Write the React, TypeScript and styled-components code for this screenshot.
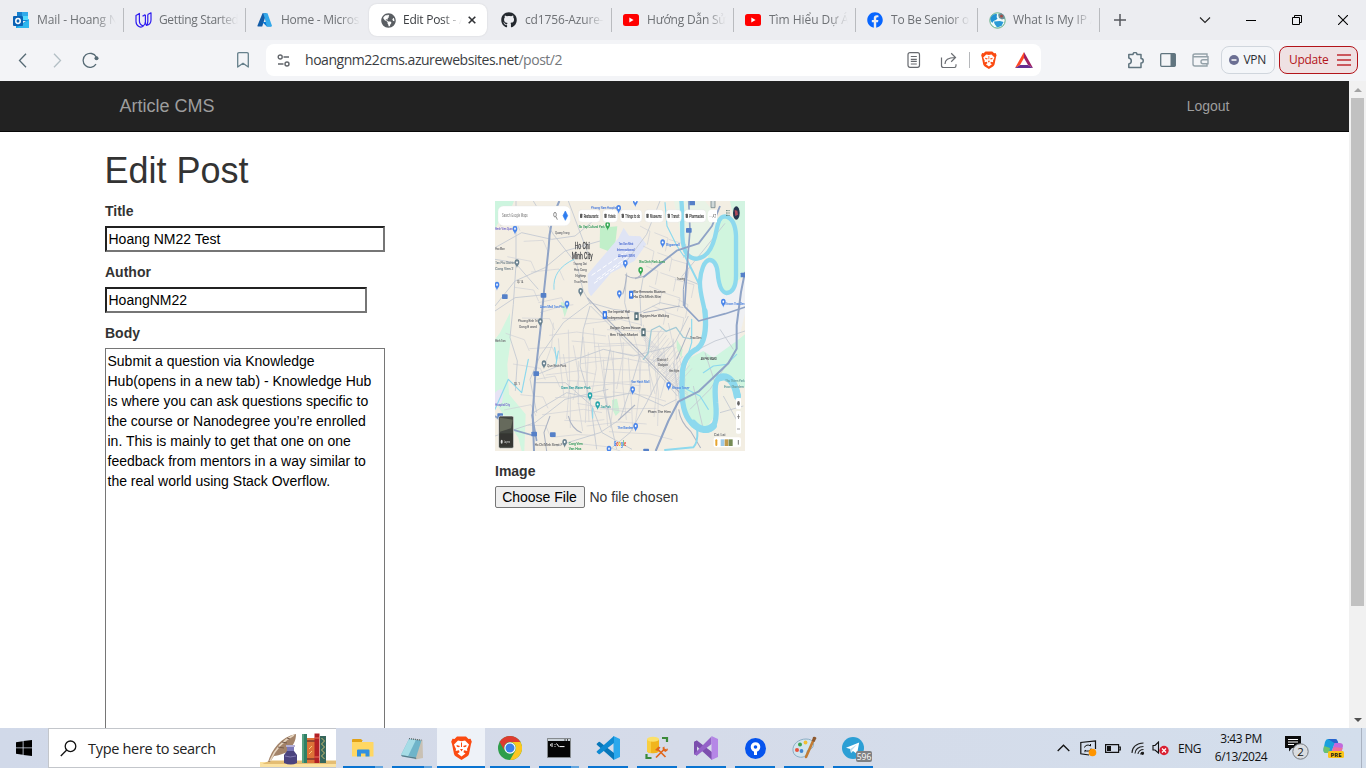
import React from "react";
import styled, { createGlobalStyle, css } from "styled-components";
import { FaGithub, FaFacebook, FaGlobeAmericas } from "react-icons/fa";

const ui = `"Open Sans", "Noto Sans", sans-serif`;
const arial = `"Liberation Sans", Arial, sans-serif`;

const GlobalStyle = createGlobalStyle`
  *, *::before, *::after { box-sizing: border-box; }
  html, body { margin: 0; padding: 0; background: #fff; overflow: hidden; }
  svg { display: block; flex: none; }
`;

const Screen = styled.div`
  width: 1366px;
  height: 768px;
  display: flex;
  flex-direction: column;
  overflow: hidden;
  font-family: ${ui};
`;

/* ---------- browser chrome ---------- */

const TabStrip = styled.div`
  height: 40px;
  flex: none;
  background: #ecedf1;
  display: flex;
  align-items: center;
  padding-left: 2px;
`;

const Tab = styled.div<{ $active?: boolean; $divider?: boolean }>`
  width: ${(p) => (p.$active ? 118 : 122)}px;
  height: 32px;
  margin: ${(p) => (p.$active ? "0 3px 0 1px" : "0")};
  padding: 0 ${(p) => (p.$active ? 9 : 8)}px 0 11px;
  flex: none;
  display: flex;
  align-items: center;
  border-radius: ${(p) => (p.$active ? 8 : 0)}px;
  ${(p) => p.$active && css`background: #fff; box-shadow: 0 0 2px rgba(0, 0, 0, 0.12);`}
  ${(p) =>
    p.$divider &&
    css`
      background: linear-gradient(#b9bbbf, #b9bbbf) right center / 1px 24px no-repeat;
    `}
`;

const TabIcon = styled.span`
  width: 16px;
  height: 16px;
  flex: none;
  display: flex;
  align-items: center;
  justify-content: center;
`;

const TabTitle = styled.span<{ $active?: boolean; $space?: number }>`
  flex: 1;
  min-width: 0;
  margin-left: ${(p) => (p.$active ? 7 : 8)}px;
  overflow: hidden;
  white-space: nowrap;
  font-size: 12px;
  line-height: 20px;
  letter-spacing: ${(p) => p.$space ?? -0.15}px;
  color: ${(p) => (p.$active ? "#3b3e42" : "#6e7175")};
  mask-image: linear-gradient(90deg, #000 calc(100% - 20px), transparent 100%);
`;

const TabClose = styled.span`
  width: 10px;
  margin-left: 6px;
  flex: none;
`;

const NewTab = styled.div`
  width: 40px;
  display: flex;
  justify-content: center;
`;

const WindowButtons = styled.div`
  margin-left: auto;
  display: flex;
`;

const WindowButton = styled.div`
  width: 46px;
  height: 40px;
  display: flex;
  align-items: center;
  justify-content: center;
`;

const Toolbar = styled.div`
  height: 41px;
  flex: none;
  background: #f3f4f7;
  display: flex;
  align-items: center;
  padding: 0 8px 1px 16px;
`;

const NavButtons = styled.div`
  display: flex;
  align-items: center;
  gap: 18px;
  width: 220px;
`;

const AddressBar = styled.div`
  width: 775px;
  height: 32px;
  margin-left: 16px;
  padding: 0 8px 0 11px;
  border-radius: 8px;
  background: #fff;
  display: flex;
  align-items: center;
`;

const Url = styled.span`
  flex: 1;
  margin-left: 14px;
  font-size: 14px;
  line-height: 20px;
  letter-spacing: -0.46px;
  color: #3a3d42;
  span { color: #74777c; }
`;

const ShareIcon = styled.svg`
  margin-left: 19px;
`;

const BarDivider = styled.span`
  width: 1px;
  height: 16px;
  margin: 0 11px;
  background: #b6b8bb;
`;

const RewardsIcon = styled.svg`
  margin-left: 18px;
`;

const ExtensionIcons = styled.div`
  display: flex;
  align-items: center;
  gap: 16px;
  margin-left: 86px;
`;

const PillButton = styled.div<{ $alert?: boolean }>`
  height: 28px;
  width: ${(p) => (p.$alert ? 79 : 54)}px;
  margin-left: ${(p) => (p.$alert ? 4 : 12)}px;
  padding: 0 ${(p) => (p.$alert ? "6px 0 9px" : "8px 0 7px")};
  border: 1px solid ${(p) => (p.$alert ? "#b3141a" : "#d0d6dd")};
  border-radius: 8px;
  background: ${(p) => (p.$alert ? "#efe1e3" : "#f4f6f9")};
  color: ${(p) => (p.$alert ? "#b3141a" : "#2a2d33")};
  display: flex;
  align-items: center;
  justify-content: space-between;
  font-size: 12px;
  line-height: 16px;
  letter-spacing: -0.3px;
`;

/* ---------- web page ---------- */

const Viewport = styled.div`
  height: 647px;
  flex: none;
  display: flex;
  overflow: hidden;
  background: #fff;
`;

const Page = styled.div`
  flex: 1;
  overflow: hidden;
  font-family: ${arial};
  font-size: 14px;
  line-height: 20px;
  color: #333;
`;

const Navbar = styled.nav`
  height: 51px;
  background: #222;
  border-bottom: 1px solid #080808;
`;

const Container = styled.div`
  width: 1170px;
  margin: 0 auto;
  padding: 0 15px;
`;

const NavRow = styled(Container)`
  height: 50px;
  display: flex;
  align-items: center;
  justify-content: space-between;
  padding: 0 30px;
  color: #9d9d9d;
`;

const Brand = styled.span`
  font-size: 18px;
`;

const Heading = styled.h1`
  height: 40px;
  margin: 19px 0 10px;
  font-size: 36px;
  font-weight: 400;
  line-height: 40px;
`;

const FormColumns = styled.form`
  display: flex;
`;

const FormColumn = styled.div`
  width: 390px;
  display: flex;
  flex-direction: column;
  align-items: flex-start;
`;

const Field = styled.div`
  display: flex;
  flex-direction: column;
  margin-bottom: 10px;
`;

const Label = styled.label`
  margin-bottom: 5px;
  padding-left: 0.5px;
  font-weight: 700;
`;

const TextInput = styled.input<{ $width: number }>`
  width: ${(p) => p.$width}px;
  height: 26px;
  padding: 1px 1px 1px 2px;
  border: 2px solid #767676;
  border-top-color: #212121;
  border-left-color: #212121;
  border-radius: 0;
  outline: 0;
  background: #fff;
  font: 14px/20px ${arial};
  color: #000;
`;

const TextArea = styled.textarea`
  width: 280px;
  height: 606px;
  padding: 2px;
  border: 1px solid #767676;
  border-radius: 0;
  resize: none;
  outline: 0;
  overflow: hidden;
  font: 14px/20px ${arial};
  color: #000;
`;

const MapFrame = styled.div`
  width: 250px;
  height: 250px;
  margin-bottom: 10px;
  overflow: hidden;
`;

const FileRow = styled.div`
  display: flex;
  align-items: center;
  gap: 5px;
`;

const FileButton = styled.button`
  width: 90px;
  height: 22px;
  padding: 0;
  border: 1px solid #767676;
  border-radius: 2px;
  background: #efefef;
  font: 14px/18px ${arial};
  color: #000;
`;

const Scrollbar = styled.div`
  width: 17px;
  flex: none;
  background: #f1f1f1;
  display: flex;
  flex-direction: column;
  align-items: center;
`;

const ScrollArrow = styled.div`
  height: 17px;
  display: flex;
  align-items: center;
`;

const ScrollThumb = styled.div`
  width: 13px;
  height: 508px;
  margin-bottom: auto;
  background: #c1c1c1;
`;

/* ---------- taskbar ---------- */

const Taskbar = styled.div`
  height: 40px;
  flex: none;
  display: flex;
  background: linear-gradient(90deg, #d1d9e9, #d5dbe9 50%, #d3deec);
  color: #111;
`;

const StartButton = styled.div`
  width: 48px;
  display: flex;
  align-items: center;
  justify-content: center;
`;

const SearchBox = styled.div`
  width: 288px;
  height: 40px;
  padding-left: 11px;
  border: 1px solid #c3c6cb;
  border-right: 0;
  background: #fff;
  display: flex;
  align-items: center;
`;

const SearchText = styled.span`
  flex: 1;
  margin-left: 11px;
  padding-top: 2px;
  font-size: 14.5px;
  letter-spacing: -0.3px;
  line-height: 20px;
  white-space: nowrap;
  color: #222;
`;

const AppList = styled.div`
  display: flex;
  margin-left: 3px;
  gap: 1px;
`;

const AppButton = styled.div<{ $active?: boolean; $stacked?: boolean }>`
  width: 48px;
  height: 40px;
  display: flex;
  align-items: center;
  justify-content: center;
  position: relative;
  background: ${(p) => (p.$active ? "#eef2f8" : "transparent")};
  &::after {
    content: "";
    position: absolute;
    bottom: 0;
    left: ${(p) => (p.$active ? 0 : 4)}px;
    right: ${(p) => (p.$active ? 0 : 4)}px;
    height: 2px;
    background: ${(p) =>
      p.$stacked ? "linear-gradient(90deg, #0a74d1 32px, #62a5df 32px)" : "#0a74d1"};
  }
`;

const CountBadge = styled.span`
  position: absolute;
  right: 5px;
  bottom: 6px;
  width: 16px;
  height: 11px;
  border-radius: 2px;
  background: #7e8083;
  color: #fff;
  font-size: 8.5px;
  line-height: 11px;
  text-align: center;
`;

const Tray = styled.div`
  margin-left: auto;
  display: flex;
  align-items: center;
  font-size: 12px;
`;

const TrayIcon = styled.span<{ $gap: number }>`
  margin-right: ${(p) => p.$gap}px;
`;

const Language = styled.span`
  width: 24px;
  font-size: 12px;
  letter-spacing: -0.5px;
  white-space: nowrap;
`;

const Clock = styled.div`
  width: 62px;
  margin: 0 13px 0 8px;
  display: flex;
  flex-direction: column;
  align-items: center;
  font-size: 12px;
  line-height: 18px;
  letter-spacing: -0.5px;
  white-space: nowrap;
`;

const Notifications = styled.svg`
  margin-right: 14px;
`;

const ShowDesktop = styled.div`
  width: 5px;
  height: 40px;
  margin-left: 17px;
  border-left: 1px solid #a9b2c1;
`;

/* ---------- tab icons ---------- */

const OutlookIcon = () => (
  <svg width="16" height="16" viewBox="0 0 16 16">
    <path d="M4 0h11v9H4z" fill="#1681cf" />
    <path d="M9 0h6v4H9z" fill="#30a9ea" />
    <path d="M9 4h6v4H9z" fill="#50d9ff" />
    <path d="M3 7l7 4 6-4v9H3z" fill="#1a9be0" />
    <path d="M3 16l13-8v8z" fill="#2fb7ef" />
    <rect y="4" width="10" height="10" rx="1" fill="#0b62b4" />
    <ellipse cx="5" cy="9" rx="2.2" ry="2.4" fill="none" stroke="#fff" strokeWidth="1.5" />
  </svg>
);

const UdacityIcon = () => (
  <svg width="17" height="16" viewBox="0 0 17 16" fill="none" stroke="#2f1df0" strokeWidth="1.2" strokeLinejoin="round">
    <path d="M1 3.4 4.4 1.4V9c0 2.600 1.400 4.200 4 4.900C6 16.300 1 14.500 1 9.600z" />
    <path d="M8.400 13.900C9.800 12.800 10.400 11.600 10.400 10V3" />
    <path d="M7.500 4.200 10.400 2.600" />
    <path d="M12.800 2.600 16 .8V8c0 3-1.700 4.800-4.600 5.400-.8-.8-1-1.800-1-3.400M12.800 2.600V9.500c0 1.800-.5 3-1.400 3.900" />
  </svg>
);

const AzureIcon = () => (
  <svg width="16" height="16" viewBox="0 0 16 16">
    <path d="M5.500 1.200h4L5.200 14.600H1.300c-.7 0-1-.6-.8-1.200z" fill="#125ca8" />
    <path d="M11 10H5.200l4.600 4.600h4.400z" fill="#0a78d4" />
    <path d="M6.200 1.200h4.300l4.400 12.200c.3.700-.2 1.200-.8 1.200h-4.300L7.700 6z" fill="#33a8ea" />
  </svg>
);

const YoutubeIcon = () => (
  <svg width="16" height="12" viewBox="0 0 16 12">
    <rect width="16" height="12" rx="2.500" fill="#f00" />
    <path d="M6.300 3.500 10.600 6 6.300 8.500z" fill="#fff" />
  </svg>
);

const EarthIcon = () => (
  <svg width="17" height="17" viewBox="0 0 17 17">
    <circle cx="8.500" cy="8.500" r="7.700" fill="#f1fbfa" stroke="#5fae83" strokeWidth="1" />
    <path d="M1.500 6C3 3 5.500 1.300 8 2.200 8 4 7 5 8.500 6.500 7 9 4 8 3.500 11 2 10 1 8 1.500 6z" fill="#2193d2" />
    <path d="M5 9.500l6-.5 3.500 1-2 4-4.500 1.600C7 13.500 5 12 5 9.500z" fill="#2a9ad6" />
    <path d="M9 2.500l3-1.500 3 2 1 3.500-3 1-3-1.500z" fill="#6b8f98" />
    <circle cx="12.500" cy="4.200" r="1.400" fill="#a54b44" />
  </svg>
);

/* ---------- map picture ---------- */

const Pin = ({ x, y, c }: { x: number; y: number; c: string }) => (
  <g>
    <path d={`M${x} ${y + 18}c-1-9-7-10-7-18a7 9 0 0 1 14 0c0 8-6 9-7 18z`} fill={c} />
    <ellipse cx={x} cy={y} rx="2.500" ry="3.500" fill="#fff" />
  </g>
);

const bluePins = [[75, 98], [386, 36], [436, 16], [518, 139], [406, 201], [388, 292], [231, 323], [21, 266], [700, 317], [428, 580], [536, 567], [437, 690], [357, 758]];
const greyPins = [[81, 199], [272, 285], [151, 376], [162, 502], [224, 738]];

const minorStreets: string[] = [];
for (let i = 0; i < 26; i++) {
  const x = 190 + i * 15;
  const y = 380 + ((i * 47) % 120);
  minorStreets.push(`M${x} ${y}l${((i * 13) % 30) - 5} ${70 + ((i * 29) % 90)}l${((i * 31) % 40) - 22} ${60 + ((i * 17) % 60)}`);
}
for (let i = 0; i < 24; i++) {
  const y = 350 + i * 17;
  const x = 150 + ((i * 67) % 240);
  minorStreets.push(`M${x} ${y}l${60 + ((i * 23) % 70)} ${((i * 19) % 34) - 18}l${40 + ((i * 37) % 50)} ${((i * 11) % 26) - 6}`);
}
for (let i = 0; i < 14; i++) {
  minorStreets.push(`M${455 + i * 8} ${480 + i * 7}l${60 - i} ${-80 + i * 2}M${440 + i * 7} ${395 + i * 12}l70 ${65 - i}`);
}
for (let i = 0; i < 14; i++) {
  minorStreets.push(`M${30 + ((i * 71) % 120)} ${90 + i * 46}l${45 + ((i * 13) % 40)} ${((i * 17) % 40) - 20}l15 34`);
  minorStreets.push(`M${450 + ((i * 43) % 120)} ${90 + i * 20}l${30 + ((i * 11) % 30)} 16l-8 40`);
}

const mapLabels: [number, number, number, string, string][] = [
  [303, 40, 78, "#5d87dc", "Phuong Nam Hospital"],
  [266, 95, 78, "#47a36b", "Go Vap Cultural Park"],
  [386, 146, 44, "#5b79d6", "Tan Son Nhat"],
  [380, 165, 54, "#5b79d6", "International"],
  [384, 183, 50, "#5b79d6", "Airport SGN"],
  [528, 151, 42, "#5b8de0", "Gigamall"],
  [447, 201, 78, "#47a36b", "Gia Dinh Park Area"],
  [16, 205, 58, "#7b8a92", "Tan Phu District"],
  [16, 221, 54, "#7b8a92", "Cong Vien 2"],
  [430, 290, 96, "#6f7073", "War Remnants Museum"],
  [430, 307, 82, "#6f7073", "Ho Chi Minh Site"],
  [352, 350, 68, "#6f7073", "The Imperial Hall"],
  [352, 368, 66, "#6f7073", "Independence"],
  [449, 363, 88, "#6f7073", "Nguyen Hue Walking"],
  [360, 400, 92, "#6f7073", "Saigon Opera House"],
  [360, 419, 84, "#6f7073", "Ben Thanh Market"],
  [150, 335, 73, "#5b8de0", "Aeon Mall Tan Phu"],
  [84, 378, 60, "#7b7d80", "Phuong Binh Tri"],
  [88, 396, 52, "#7b7d80", "Dong B ward"],
  [172, 514, 57, "#7b7d80", "Que Binh Park"],
  [214, 579, 88, "#3fa3a3", "Dam Sen Water Park"],
  [332, 635, 30, "#3fa3a3", "Zoo Park"],
  [424, 561, 54, "#5b8de0", "Van Hanh Mall"],
  [546, 578, 52, "#5b8de0", "Bitexco Tower"],
  [382, 698, 48, "#5b8de0", "The Garden"],
  [473, 652, 70, "#76777a", "Pham The Hien"],
  [632, 491, 48, "#55565a", "AN PHU WARD"],
  [560, 253, 24, "#76777a", "Truong"],
  [600, 430, 34, "#76777a", "Thao Dien"],
  [16, 161, 28, "#76777a", "Hoc Mon"],
  [82, 262, 18, "#76777a", "QL 1A"],
  [16, 437, 30, "#76777a", "Binh Tan"],
  [72, 566, 18, "#76777a", "QL 1"],
  [16, 630, 44, "#8178d0", "Hospital City"],
  [502, 494, 34, "#76777a", "District 1"],
  [504, 510, 30, "#76777a", "Saigon"],
  [538, 527, 30, "#76777a", "Ben Nghe"],
  [134, 750, 82, "#76777a", "Ho Chi Minh Street 7"],
  [236, 746, 42, "#47a36b", "Cong Vien"],
  [236, 763, 38, "#47a36b", "Van Hoa"],
  [706, 558, 58, "#74a8a8", "Thu Thiem Park"],
  [702, 577, 60, "#74a8a8", "Eco Garden"],
  [706, 327, 58, "#5b8de0", "Vincom Thao Dien"],
  [16, 103, 52, "#8178d0", "Benh Vien Quan"],
  [250, 208, 40, "#7b7d80", "Truong Dai"],
  [252, 226, 38, "#7b7d80", "Hoc Cong"],
  [256, 243, 32, "#7b7d80", "Nghiep"],
  [252, 260, 40, "#7b7d80", "Thuc Pham"],
  [196, 114, 42, "#7b7d80", "Quang Trung"],
  [672, 719, 34, "#7b7d80", "Cat Lai"],
];

const chips: [number, number, string][] = [
  [265, 66, "Restaurants"],
  [338, 45, "Hotels"],
  [390, 66, "Things to do"],
  [464, 57, "Museums"],
  [528, 46, "Transit"],
  [582, 66, "Pharmacies"],
];

const MapPicture = () => (
  <svg width="250" height="250" viewBox="15 15 750 750" fontFamily='Roboto, "Liberation Sans", sans-serif'>
    <defs>
      <filter id="soft" x="0" y="0" width="100%" height="100%">
        <feGaussianBlur stdDeviation="1.700" />
      </filter>
    </defs>
    <rect x="15" y="15" width="750" height="750" fill="#f3eee3" />
    <g filter="url(#soft)">
      {/* parks and green land */}
      <path d="M15 15h57l-12 30-25 15-20 40z" fill="#cdf5df" />
      <path d="M60 350l-30 60-15 20v185l30 50 40 60 10 40h8l4-110-50-60-5-90 10-70z" fill="#d2f6e0" />
      <path d="M15 590q22-20 25 0l-4 30-21 8z" fill="#e7e3f4" />
      <path d="M330 95l52-4-6 50-22 24-25-10z" fill="#c1efc9" />
      <path d="M530 15h22l28 140 35 30 35-15 20-50 15-55-40-50z" fill="#e9f3e6" />
      <path d="M690 67l25-5 22 40v160l-25 30-27-25-10-60-24-16 20-60z" fill="#d0f5de" />
      <path d="M720 15h45v220l-22 20-4-150z" fill="#d3f4e2" />
      <path d="M660 192l20 20 6 55 26 26 30-30 23-20v110l-24 100-60 40-60-20 26-60-8-80-10-50 6-50z" fill="#eff0f3" />
      <path d="M600 485l40-20 30 20 70-50 25-20v160l-40-20-30-10-18 26-4 90-30 44-40-10-20-40-6-100z" fill="#cff5e0" />
      <path d="M700 560l30 10 30 60v80l-50 30-60-20 30-50z" fill="#f1efe4" />
      <path d="M366 612l15-4 8 40-12 12-10-20zM560 430l18 30-4 26-14-30zM212 318l26 6-14 40z" fill="#cbf1d4" />
      {/* airport */}
      <path d="M293 235l92-108 16-32 16 24 34 2 18 24-36 50-70 36-60 70-8-14z" fill="#dfe4f5" />
      <path d="M305 238l110-75M312 262l96-68M320 250l100-72" stroke="#fff" strokeWidth="3" strokeDasharray="14 6" fill="none" />

      {/* minor streets */}
      <path d={minorStreets.join("")} stroke="#ced0d6" strokeWidth="2" fill="none" />
      <g stroke="#c3c8d2" strokeWidth="2.600" fill="none">
        <path d="M78 15v190l-8 120-10 100 22 70-6 90M15 155l80-45 90 20 70-10 60-50M130 15l60 100 70 90 20 80 22 40" />
        <path d="M15 330l60-75 90-40 60-50 105-30M15 345l60-40 80-8M300 320l-80 60-70 100-30 70 20 100M302 330l60 60 90 90 60 60 50 60" />
        <path d="M300 320l70 20 80 10 60-30 70 15M410 230l-6 90 20 80M460 240l-10 60 4 90M300 330l-20 70-10 110 30 100 20 150" />
        <path d="M130 540l100-40 110-40 90 20 120-30M136 560l90 0 80 70 30 80 90 50M130 650l100-60 90 20 110-20 90 40 40-20" />
        <path d="M360 460l-20 120 40 180M450 480l-30 100-30 90-60 40-130 40M510 540l-40 80-50 90-60 50M550 500l20 120M595 360l-40 80-80 70" />
        <path d="M15 720l120-40 90-70 130-30M15 190l60 10 70 80M235 15l30 80 30 80M510 15l-40 100-60 80M765 405l-90 30-80 40M705 82l-80 100-50 60M575 245l50 20M690 400l40 60" />
        <path d="M645 470l30 90M600 640l60-60 60-90M640 700l-30-130M700 600l50 90M690 650l70-20" />
      </g>
      <g stroke="#aeb5c4" strokeWidth="3.200" fill="none">
        <path d="M292 305l70 75 80 80 60 62 70 70M410 235q-4 40-12 60M405 236q30 20 50 0M465 240l-30 8M460 350l110-20M600 395q-20 50-40 95" />
        <path d="M235 660q10 40 40 50M385 672l50-45M180 660l-18 50 8 55M566 640q6 40 36 66l30 50" />
      </g>

      {/* water */}
      <g fill="none" stroke="#8dd9ee" strokeLinecap="round" strokeLinejoin="round">
        <path d="M574 12C578 50 576 80 577 120C579 175 600 190 622 188C655 183 668 150 675 122C683 90 684 62 704 61C728 62 737 92 738 120L738 240C738 275 725 291 710 291C690 289 685 255 683 230C681 205 670 191 658 192C642 194 632 225 630 255C628 290 642 325 645 352" strokeWidth="13" />
        <path d="M645 345C650 400 645 440 622 458C590 474 579 500 577 532C575 580 573 625 590 660C608 696 640 706 656 701C682 693 680 650 677 620C674 580 672 545 697 541C722 541 738 575 745 600" strokeWidth="16" />
        <path d="M690 545C715 535 735 560 742 600" strokeWidth="22" />
        <path d="M610 682C630 705 655 705 670 690" strokeWidth="21" />
        <path d="M460 490l14-18 10-70 24-12 20 16 30-12 22 30 20 4" strokeWidth="4" stroke="#a3cad6" />
        <path d="M194 455l6 40M205 465l-8 45M308 636v30M15 640l40-90 40 40 20-100M640 530l30-20 40-5 30-30M655 640l-25-40-40-20M605 370v70l-12 40M525 20l6 70 30 60 20 30" strokeWidth="3.500" />
        <path d="M525 762l85-8q14-14 12-50M585 180l40 80" strokeWidth="6" />
        <path d="M192 280q-6-60 60-90" strokeWidth="3" />
      </g>

      {/* highways */}
      <g fill="none" stroke="#8fa3c6" strokeWidth="6" strokeLinejoin="round">
        <path d="M208 15q-30 60-32 140l-14 130-8 90-18 160-8 120 4 110" />
        <path d="M596 12l4 90-8 100-8 130 42 43 80-22 60-20" strokeWidth="5" />
        <path d="M592 200l-12 80v50" strokeWidth="3" />
        <path d="M460 244q50-40 100-80l66-22 40-52 24-60" strokeWidth="5.500" />
        <path d="M765 228l-12 60-13 100v70l-25 44-90 85-60 30-30 58-38 90" />
        <path d="M15 660l50 40 70 20M126 655l14 80" strokeWidth="5" />
      </g>
      <g fill="#5580c8">
        {[[36, 295], [152, 291], [588, 96], [130, 526], [124, 707], [180, 709], [752, 230], [598, 14], [22, 652], [460, 758]].map(([x, y]) => (
          <rect key={`${x}-${y}`} x={x} y={y} width="17" height="14" rx="2" />
        ))}
      </g>

      {bluePins.map(([x, y]) => <Pin key={`${x}-${y}`} x={x} y={y} c="#4a85ea" />)}
      {greyPins.map(([x, y]) => <Pin key={`${x}-${y}`} x={x} y={y} c="#6a8290" />)}
      <Pin x={353} y={86} c="#34a852" />
      <Pin x={452} y={222} c="#34a852" />
      <Pin x={300} y={598} c="#28a5ab" />
      <Pin x={323} y={625} c="#28a5ab" />
      {[[417, 284, "#3e7be6"], [338, 345, "#3e7be6"], [433, 349, "#557079"], [454, 397, "#557079"]].map(([x, y, c]) => (
        <g key={`${x}-${y}`}>
          <rect x={x} y={y} width="13" height="24" rx="2" fill={c as string} />
          <rect x={(x as number) + 4} y={(y as number) + 7} width="5" height="10" fill="#fff" />
        </g>
      ))}

      <g fontSize="13">
        {mapLabels.map(([x, y, w, c, t]) => (
          <text key={`${x}-${y}`} x={x} y={y} fill={c} stroke={c} strokeWidth=".5" textLength={w} lengthAdjust="spacingAndGlyphs">{t}</text>
        ))}
      </g>
      <g fontSize="26" fill="#4b4c4f" stroke="#4b4c4f" strokeWidth="1">
        <text x="254" y="158" textLength="45" lengthAdjust="spacingAndGlyphs">Ho Chi</text>
        <text x="245" y="189" textLength="63" lengthAdjust="spacingAndGlyphs">Minh City</text>
      </g>
      <text x="371" y="750" fontSize="19" fontWeight="700" textLength="37" lengthAdjust="spacingAndGlyphs">
        <tspan fill="#4285f4">G</tspan><tspan fill="#ea4335">o</tspan><tspan fill="#fbbc05">o</tspan><tspan fill="#4285f4">g</tspan><tspan fill="#34a853">l</tspan><tspan fill="#ea4335">e</tspan>
      </text>

      {/* search card and category chips */}
      <rect x="24" y="30" width="217" height="59" rx="16" fill="#fff" stroke="#e3e3e3" />
      <text x="36" y="64" fontSize="18" fill="#7b7b7b" textLength="77" lengthAdjust="spacingAndGlyphs">Search Google Maps</text>
      <ellipse cx="195" cy="56" rx="4" ry="7" fill="none" stroke="#777" strokeWidth="2.500" />
      <path d="M198 62l4 9" stroke="#777" strokeWidth="2.500" />
      <path d="M226 45l7 14-7 14-7-14z" fill="#2f7df0" stroke="#2f7df0" strokeWidth="2" />
      {chips.map(([x, w, t]) => (
        <g key={t}>
          <rect x={x} y="41" width={w} height="38" rx="12" fill="#fff" stroke="#dedede" />
          <rect x={x + 5} y="53" width="7" height="13" rx="2" fill="#5c5c5c" />
          <text x={x + 16} y="66" fontSize="15" fill="#4a4a4a" stroke="#4a4a4a" strokeWidth=".5" textLength={w - 22} lengthAdjust="spacingAndGlyphs">{t}</text>
        </g>
      ))}
      <path d="M681 41h-18q-10 0-10 19t10 19h18z" fill="#fff" />
      <text x="658" y="66" fontSize="15" fill="#666" textLength="20" lengthAdjust="spacingAndGlyphs">··· AT</text>
      <path d="M663 13h12v22h-12z" fill="#cfd8d8" stroke="#5d7378" strokeWidth="2" />
      <path d="M708 44h11M708 51h11M708 58h11" stroke="#5c7a72" strokeWidth="3" strokeDasharray="3 1" />
      <ellipse cx="739" cy="51" rx="10" ry="20" fill="#25364f" />
      <path d="M734 42l8 2 2 12-8 4z" fill="#b0485a" />

      {/* layer thumbnail and zoom controls */}
      <rect x="26" y="660" width="45" height="97" rx="5" fill="#43453f" stroke="#f3f3f3" strokeWidth="2" />
      <path d="M30 665l38 6-5 26-33 10z" fill="#666a5b" />
      <path d="M28 712h41v40H28z" fill="#2f302f" opacity=".7" />
      <ellipse cx="35" cy="737" rx="3" ry="6" fill="#ddd" />
      <text x="42" y="742" fontSize="13" fill="#ddd" textLength="18" lengthAdjust="spacingAndGlyphs">Layers</text>
      <rect x="738" y="606" width="15" height="33" rx="4" fill="#fff" />
      <ellipse cx="745.500" cy="622" rx="4" ry="7" fill="#666" />
      <rect x="738" y="645" width="15" height="68" rx="4" fill="#fff" />
      <path d="M741 662h9M745.500 655v14M741 699h9" stroke="#666" strokeWidth="2" />
      <rect x="671" y="724" width="82" height="30" rx="6" fill="#fff" />
      <rect x="676" y="730" width="6" height="20" rx="3" fill="#e6a42d" />
      <rect x="692" y="730" width="11" height="20" fill="#9ecbe9" />
      <rect x="704" y="730" width="11" height="20" fill="#c19a4c" />
      <rect x="716" y="730" width="12" height="20" fill="#768b54" />
      <path d="M745 732v14" stroke="#777" strokeWidth="3" />
    </g>
  </svg>
);

/* ---------- taskbar icons ---------- */

const SearchArt = () => (
  <svg width="76" height="38" viewBox="0 0 76 38">
    <path d="M0 33h76v5H0z" fill="#fbe2a1" />
    <path d="M0 36 10 31.500h66V35H2z" fill="#e4bd73" />
    <path d="M8 33C12 20 21 8 36 5c0 7-3 12-7 15 1 1-1 3-4 4-5 2-9 3-11 3l-4 6z" fill="#a38369" />
    <path d="M10 32C15 20 22 12 34 6" stroke="#e6d5c0" strokeWidth="1.500" fill="none" />
    <path d="M22 13l5 1M18 18l6 1M27 9l3 1" stroke="#755b4b" strokeWidth="1" />
    <path d="M27 17h7v6h-7z" fill="#7a77b7" /><path d="M26 16h9v2h-9z" fill="#b6b0d6" />
    <path d="M27 22h7l3 4v8q-6 3-13 0v-8z" fill="#4b437f" />
    <path d="M25 27q5 2 11 0" stroke="#8178b2" fill="none" />
    <path d="M42 5h5v29h-5z" fill="#2f8067" />
    <path d="M42 5h2v29h-2z" fill="#58a183" />
    <path d="M47 9h8v25h-8z" fill="#dd7338" /><path d="M47 12h8M47 30h8" stroke="#7d392d" strokeWidth="1.500" />
    <path d="M49 20l3-3M49 25l3-3" stroke="#f8ca76" />
    <path d="M54.500 4.500h5v29.500h-5z" fill="#b32025" /><path d="M54.500 9h5M54.500 28h5" stroke="#ec735d" />
    <path d="M60 7h6v27h-6z" fill="#37675c" /><path d="M61.500 9l3 3-3 3 3 3-3 3 3 3-3 3 3 3" stroke="#c9bc73" fill="none" />
  </svg>
);

const ExplorerIcon = () => (
  <svg width="22" height="20" viewBox="0 0 22 20">
    <path d="M0 2q0-1 1-1h8l2 2h-1v3H0z" fill="#e2a215" />
    <path d="M0 4h21q.5 0 .5.700V18q0 .6-.6.6H.6Q0 18.600 0 18z" fill="#ffd763" />
    <path d="M5 18.600v-6.100q0-1 1-1h10.500q1 0 1 1v6.100h-4v-3H9v3z" fill="#2f8fe0" />
  </svg>
);

const NotepadIcon = () => (
  <svg width="24" height="23" viewBox="0 0 24 23">
    <path d="M11 1.500 22.500 3l.5 18-8 1.500-1-2z" fill="#c9c1b4" />
    <path d="M9 2 21.500 3.500 16 20.500 1 18z" fill="#6fb4c9" />
    <path d="M9 2l7 .8L8 19.200 1 18z" fill="#a6dce6" />
    <path d="M1 18l15 2.500.3 1.500L2 19.600z" fill="#517d8c" />
    <path d="M9 1.600 21.500 3.200" stroke="#596a72" strokeWidth="1.300" strokeDasharray="1 1" />
  </svg>
);

const ShieldIcon = ({ size }: { size: number }) => (
  <svg width={size * 0.875} height={size} viewBox="0 0 21 24">
    <path d="M6 .5h9L17.500 3l2-.2 1.300 3L20 8l-2 10q-.5 1.500-2 2.500l-5.500 3.500L5 20.500q-1.500-1-2-2.500L1 8 .2 5.800l1.300-3 2 .2z" fill="#fb4b12" />
    <path d="M7 4.500l3.500.8 3.500-.8 4 4-1 2.500-1 2 .3 2-3.300-.7-.5 2 2 1.200-4 3-4-3 2-1.200-.5-2-3.300.7.3-2-1-2-1-2.500z" fill="#fff" />
    <path d="M5.500 9l3.500 1-1 1.300-2.200-.6zM15.500 9 12 10l1 1.300 2.200-.6zM9 13h3l-1.500 2.500zM10 6.500h1V11h-1z" fill="#fb4b12" />
  </svg>
);

const ChromeIcon = () => (
  <svg width="24" height="24" viewBox="0 0 24 24">
    <circle cx="12" cy="12" r="12" fill="#2f9e4b" />
    <path d="M1.600 6A12 12 0 0 1 22.400 6H12a6 6 0 0 0-5.200 9z" fill="#de3b2f" />
    <path d="M22.400 6A12 12 0 0 1 12 24l5.200-9A6 6 0 0 0 12 6z" fill="#fcc71e" />
    <circle cx="12" cy="12" r="5.700" fill="#fff" />
    <circle cx="12" cy="12" r="4.500" fill="#3b80ea" />
  </svg>
);

const TerminalIcon = () => (
  <svg width="24" height="20" viewBox="0 0 24 20">
    <path d="M.5.500h23v19H.5z" fill="#050505" stroke="#858a8e" />
    <path d="M1 1h22v2H1z" fill="#c9d1d7" />
    <path d="M18 1v2M20.500 1v2" stroke="#444" />
    <path d="M6 6H4.500q-1 0-1 1t1 1H6M8 6v.8M8 8v.8M9.500 5.500l2.500 3.300M12.500 8.600h5" stroke="#fff" fill="none" />
  </svg>
);

const CodeIcon = () => (
  <svg width="24" height="24" viewBox="0 0 24 24">
    <path d="M17.500 0 24 3v18l-6.500 3z" fill="#2ba8ec" />
    <path d="M1 7.500 2.700 6q.6-.5 1.200 0L18 17v7L.8 8.800Q.3 8 1 7.500z" fill="#0877b9" />
    <path d="M1 16.500l1.700 1.500q.6.500 1.200 0L18 7V0L.8 15.200q-.5.700.2 1.300z" fill="#0f8ad2" />
  </svg>
);

const DatabaseToolsIcon = () => (
  <svg width="24" height="24" viewBox="0 0 24 24">
    <path d="M2 3v12c0 3 12 3 12 0V3z" fill="#f1b51d" />
    <path d="M2 3v12c0 1 1.500 2 4 2.200V3z" fill="#f9ce3f" />
    <ellipse cx="8" cy="3.200" rx="6" ry="2.500" fill="#fbe069" />
    <path d="M17 2h5v4M1.500 18v4h5" stroke="#3b8a3a" strokeWidth="2.200" fill="none" />
    <path d="M12.500 13l8 8M19.500 13l-8.500 8.500" stroke="#e1661b" strokeWidth="1.700" />
    <path d="M10 14l3.500-3.500 2 1-3 3.500zM17.500 11.500l2-1v2l2 1 .5-1.500 1 2-2.500 2-2.500-1.500z" fill="#e1661b" />
  </svg>
);

const VisualStudioIcon = () => (
  <svg width="24" height="24" viewBox="0 0 24 24">
    <path d="M0 6l3-1.500v15L0 18z" fill="#6a4299" />
    <path d="M0 6l3-1.500L18 16v8L3 10.500 3 19.500 0 18z" fill="#7c4fae" />
    <path d="M0 18 17.500.500V8L3 19.500z" fill="#9462c8" />
    <path d="M17.500 0 24 3v18l-6.500 3z" fill="#b587e6" />
  </svg>
);

const SourcetreeIcon = () => (
  <svg width="21" height="21" viewBox="0 0 21 21">
    <circle cx="10.500" cy="10.500" r="10.500" fill="#0654ee" />
    <circle cx="10.500" cy="9" r="3.300" fill="none" stroke="#fff" strokeWidth="3" />
    <path d="M9 12.500h3V17H9z" fill="#fff" />
  </svg>
);

const PaintIcon = () => (
  <svg width="25" height="24" viewBox="0 0 25 24">
    <path d="M1 15C0 8 7 3 14 3c8 0 9 6 6 9-2 2-5 1-5 4 0 4-4 6-8 5-3-.7-5.500-2.500-6-6z" fill="#d2e4ee" stroke="#8caec4" />
    <circle cx="5" cy="14" r="2" fill="#e5533d" /><circle cx="8" cy="8.500" r="2" fill="#3ba151" />
    <circle cx="13.500" cy="6.500" r="1.900" fill="#f2bf31" /><circle cx="9.500" cy="15" r="1.900" fill="#4286d0" />
    <path d="M21.500 4 14 21" stroke="#c27c34" strokeWidth="2.600" strokeLinecap="round" />
    <path d="M20 5l1-4q2-1 3.500 1L22.500 6z" fill="#8d5930" />
  </svg>
);

const TelegramIcon = () => (
  <svg width="22" height="22" viewBox="0 0 22 22">
    <circle cx="11" cy="11" r="11" fill="#2c9fd5" />
    <path d="M4 10.800 17.200 5.500 15 17l-4-3-2 2-.7-4z" fill="#fff" />
    <path d="M8.300 12 15 7.500 10 13l-1 3z" fill="#b9dcee" />
  </svg>
);

const CopilotIcon = () => (
  <svg width="21" height="20" viewBox="0 0 21 20">
    <path d="M5 1h7q2 0 2.500 2l1 3h-4L8 15H3q-3 0-2.500-4L2 4q.8-3 3-3z" fill="#19a0dc" />
    <path d="M1 8l6 2-1 5H3q-3 0-2.500-4z" fill="#6dc36d" />
    <path d="M11.500 5h5q3.500 0 3.500 3l-1.500 6h-10z" fill="#c269dc" />
    <path d="M11 9l8.500 1-1 4h-10z" fill="#f0709a" />
    <path d="M5 1h7q2 0 2.500 2l.7 2h-4z" fill="#2863ce" />
    <rect x="5" y="13" width="16" height="7" rx="1.500" fill="#fcc318" />
    <text x="13" y="18.700" fontSize="6" fontWeight="700" textAnchor="middle" fill="#111" fontFamily='"Open Sans", sans-serif'>PRE</text>
  </svg>
);

const tabs: { title: string; icon: React.ReactNode; active?: boolean; divider?: boolean; space?: number }[] = [
  { title: "Mail - Hoang Nguyen", icon: <OutlookIcon />, divider: true, space: -0.1 },
  { title: "Getting Started", icon: <UdacityIcon />, divider: true, space: -0.35 },
  { title: "Home - Microsoft Azure", icon: <AzureIcon />, space: -0.25 },
  { title: "Edit Post - Article", icon: <FaGlobeAmericas size={15} color="#5a5e63" />, active: true, space: -0.25 },
  { title: "cd1756-Azure-App", icon: <FaGithub size={16} color="#24292f" />, divider: true },
  { title: "Hướng Dẫn Sử Dụng", icon: <YoutubeIcon />, divider: true, space: -0.2 },
  { title: "Tìm Hiểu Dự Án", icon: <YoutubeIcon />, divider: true, space: -0.05 },
  { title: "To Be Senior or not", icon: <FaFacebook size={16} color="#0866ff" />, divider: true, space: -0.2 },
  { title: "What Is My IP Address", icon: <EarthIcon />, divider: true, space: -0.1 },
];

const apps: { name: string; icon: React.ReactNode; active?: boolean; stacked?: boolean; count?: string }[] = [
  { name: "explorer", icon: <ExplorerIcon />, stacked: true },
  { name: "notepad", icon: <NotepadIcon />, stacked: true },
  { name: "brave", icon: <ShieldIcon size={24} />, active: true },
  { name: "chrome", icon: <ChromeIcon /> },
  { name: "terminal", icon: <TerminalIcon />, stacked: true },
  { name: "code", icon: <CodeIcon /> },
  { name: "database", icon: <DatabaseToolsIcon /> },
  { name: "studio", icon: <VisualStudioIcon /> },
  { name: "sourcetree", icon: <SourcetreeIcon /> },
  { name: "paint", icon: <PaintIcon /> },
  { name: "telegram", icon: <TelegramIcon />, count: "596" },
];

const body =
  "Submit a question via Knowledge Hub(opens in a new tab) - Knowledge Hub is where you can ask questions specific to the course or Nanodegree you’re enrolled in. This is mainly to get that one on one feedback from mentors in a way similar to the real world using Stack Overflow.";

export default function App() {
  return (
    <Screen>
      <GlobalStyle />
      <TabStrip>
        {tabs.map((t) => (
          <Tab key={t.title} $active={t.active} $divider={t.divider}>
            <TabIcon>{t.icon}</TabIcon>
            <TabTitle $active={t.active} $space={t.space}>{t.title}</TabTitle>
            {t.active && (
              <TabClose>
                <svg width="8" height="8" viewBox="0 0 8 8"><path d="M.7.700l6.600 6.600M7.300.700.7 7.300" stroke="#303236" strokeWidth="1.600" /></svg>
              </TabClose>
            )}
          </Tab>
        ))}
        <NewTab>
          <svg width="12" height="12" viewBox="0 0 12 12"><path d="M6 0v12M0 6h12" stroke="#55585d" strokeWidth="1.500" /></svg>
        </NewTab>
        <WindowButtons>
          <WindowButton><svg width="12" height="8" viewBox="0 0 12 8"><path d="M1 1.500 6 6.500 11 1.500" stroke="#222" fill="none" strokeWidth="1.100" /></svg></WindowButton>
          <WindowButton><svg width="10" height="1" viewBox="0 0 10 1"><path d="M0 0h10v1H0z" fill="#000" /></svg></WindowButton>
          <WindowButton>
            <svg width="10" height="10" viewBox="0 0 10 10"><path d="M.5 2.500h7v7h-7zM2.500 2.500v-2h7v7h-2" stroke="#000" fill="none" /></svg>
          </WindowButton>
          <WindowButton><svg width="10" height="10" viewBox="0 0 10 10"><path d="M0 0l10 10M10 0 0 10" stroke="#000" strokeWidth="1.100" /></svg></WindowButton>
        </WindowButtons>
      </TabStrip>

      <Toolbar>
        <NavButtons>
          <svg width="15" height="15" viewBox="0 0 15 15"><path d="M10 .8 3.500 7.500 10 14.200" stroke="#566a75" strokeWidth="1.300" fill="none" /></svg>
          <svg width="15" height="15" viewBox="0 0 15 15"><path d="M5 .8 11.500 7.500 5 14.200" stroke="#b3bfc5" strokeWidth="1.300" fill="none" /></svg>
          <svg width="17" height="16" viewBox="0 0 17 16"><path d="M14 12.200A7 7 0 1 1 14.300 5" stroke="#566a75" strokeWidth="1.300" fill="none" /><circle cx="14.500" cy="6.300" r="2" fill="#566a75" /></svg>
        </NavButtons>
        <svg width="14" height="16" viewBox="0 0 14 16"><path d="M1.700 15V2q0-1.300 1.300-1.300h8Q12.300.700 12.300 2v13L7 11.200z" stroke="#66808c" strokeWidth="1.300" fill="none" strokeLinejoin="round" /></svg>
        <AddressBar>
          <svg width="14" height="13" viewBox="0 0 14 13" fill="none" stroke="#62666b" strokeWidth="1.400"><circle cx="3.200" cy="3" r="2" /><path d="M6.500 3H12M1 10h5.500" /><circle cx="10" cy="10" r="2" /></svg>
          <Url>hoangnm22cms.azurewebsites.net<span>/post/2</span></Url>
          <svg width="14" height="16" viewBox="0 0 14 16" fill="none" stroke="#66696e" strokeWidth="1.200"><rect x="1" y=".7" width="11.500" height="14.600" rx="2" /><path d="M3.800 4.500h6M3.800 7.300h6M3.800 9.300h6M3.800 12h6" /></svg>
          <ShareIcon width="18" height="17" viewBox="0 0 18 17" fill="none" stroke="#6a6d72" strokeWidth="1.200"><path d="M1.500 5.500v8q0 2 2 2h11q1.500 0 1.500-2v-1.200" /><path d="M5 12c0-4 3-6.500 10-6.500M11.200 1.300l4.300 4.200-4.300 4.200" /></ShareIcon>
          <BarDivider />
          <ShieldIcon size={18} />
          <RewardsIcon width="18" height="16" viewBox="0 0 18 16">
            <path d="M9 0 0 16l5-3L9 6z" fill="#ff4724" /><path d="M9 0l9 16-5-3-4-7z" fill="#9e1f63" /><path d="M0 16h18l-5-3H5z" fill="#662d91" />
          </RewardsIcon>
        </AddressBar>
        <ExtensionIcons>
          <svg width="17" height="17" viewBox="0 0 17 17"><path d="M1.800 2.500H6a2 2 0 0 1 4 0h4v4a2 2 0 0 1 0 4.500v4.500H1.800V12q2.500-.5 2.500-3T1.800 6z" stroke="#60747f" strokeWidth="1.500" fill="none" strokeLinejoin="round" /></svg>
          <svg width="16" height="14" viewBox="0 0 16 14"><rect x=".7" y=".7" width="14.600" height="12.600" rx="1" stroke="#60747f" strokeWidth="1.300" fill="none" /><path d="M10.500 1h5v12h-5z" fill="#60747f" /></svg>
          <svg width="17" height="14" viewBox="0 0 17 14" fill="none" stroke="#94a1a9" strokeWidth="1.400"><path d="M15 3.500V1H3Q1 1 1 2.500V11q0 2 2 2h12v-2M1 2.500q0 1.300 2 1.300h13v7h-5q-2 0-2-2t2-2h5" /></svg>
        </ExtensionIcons>
        <PillButton>
          <svg width="10" height="10" viewBox="0 0 10 10"><circle cx="5" cy="5" r="5" fill="#6b6f93" /><path d="M2.500 5h5" stroke="#fff" strokeWidth="1.500" /></svg>
          VPN
        </PillButton>
        <PillButton $alert>
          Update
          <svg width="14" height="12" viewBox="0 0 14 12"><path d="M0 1h14M0 6h14M0 11h14" stroke="#c02a30" strokeWidth="1.300" /></svg>
        </PillButton>
      </Toolbar>

      <Viewport>
        <Page>
          <Navbar>
            <NavRow>
              <Brand>Article CMS</Brand>
              <span>Logout</span>
            </NavRow>
          </Navbar>
          <Container>
            <Heading>Edit Post</Heading>
            <FormColumns>
              <FormColumn>
                <Field>
                  <Label>Title</Label>
                  <TextInput $width={280} defaultValue="Hoang NM22 Test" />
                </Field>
                <Field>
                  <Label>Author</Label>
                  <TextInput $width={262} defaultValue="HoangNM22" />
                </Field>
                <Field>
                  <Label>Body</Label>
                  <TextArea defaultValue={body} spellCheck={false} />
                </Field>
              </FormColumn>
              <FormColumn>
                <MapFrame><MapPicture /></MapFrame>
                <Field>
                  <Label>Image</Label>
                  <FileRow>
                    <FileButton type="button">Choose File</FileButton>
                    <span>No file chosen</span>
                  </FileRow>
                </Field>
              </FormColumn>
            </FormColumns>
          </Container>
        </Page>
        <Scrollbar>
          <ScrollArrow><svg width="8" height="4" viewBox="0 0 8 4"><path d="M0 4l4-4 4 4z" fill="#a3a3a3" /></svg></ScrollArrow>
          <ScrollThumb />
          <ScrollArrow><svg width="8" height="4" viewBox="0 0 8 4"><path d="M0 0l4 4 4-4z" fill="#505050" /></svg></ScrollArrow>
        </Scrollbar>
      </Viewport>

      <Taskbar>
        <StartButton>
          <svg width="16" height="16" viewBox="0 0 16 16"><path d="M0 2.200 6.700 1.200v6.300H0zM7.500 1.100 16 0v7.500H7.500zM0 8.300h6.700v6.500L0 13.800zM7.500 8.300H16V16l-8.500-1.100z" fill="#000" /></svg>
        </StartButton>
        <SearchBox>
          <svg width="17" height="17" viewBox="0 0 17 17"><circle cx="10.500" cy="6.300" r="5.300" stroke="#111" strokeWidth="1.300" fill="none" /><path d="M6.700 10 .8 16" stroke="#111" strokeWidth="1.300" /></svg>
          <SearchText>Type here to search</SearchText>
          <SearchArt />
        </SearchBox>
        <AppList>
          {apps.map((a) => (
            <AppButton key={a.name} $active={a.active} $stacked={a.stacked}>
              {a.icon}
              {a.count && <CountBadge>{a.count}</CountBadge>}
            </AppButton>
          ))}
        </AppList>
        <Tray>
          <TrayIcon $gap={10}><svg width="13" height="8" viewBox="0 0 13 8"><path d="M.7 7 6.500 1.200 12.300 7" stroke="#111" strokeWidth="1.300" fill="none" /></svg></TrayIcon>
          <TrayIcon $gap={8}>
            <svg width="17" height="17" viewBox="0 0 17 17"><path d="M9 15 .8 13.800V2.500L15.500 1v8" stroke="#111" strokeWidth="1.200" fill="none" /><path d="M4.500 7.500a3.500 3 0 0 1 6-1.500V4M11 8.500a3.500 3 0 0 1-6 1.700v2" stroke="#111" fill="none" /><circle cx="12.500" cy="12.500" r="3.800" fill="#ff9500" /></svg>
          </TrayIcon>
          <TrayIcon $gap={10}><svg width="16" height="9" viewBox="0 0 16 9"><path d="M.6.600h13v7.800H.6zM14 3h1.300v3H14" stroke="#111" strokeWidth="1.200" fill="none" /><path d="M2 2h4v5H2z" fill="#111" /></svg></TrayIcon>
          <TrayIcon $gap={7}>
            <svg width="14" height="13" viewBox="0 0 14 13" fill="none" stroke="#222" strokeWidth="1.100"><path d="M1 11C1 5.500 5.500 1 12.500 1M4 11.500c0-4 3.500-7 8.500-7M7 12c0-2.500 2.500-4.500 5.500-4.500M9.500 12.300q.5-2 3-2" /><circle cx="11.500" cy="11.300" r="1.100" fill="#111" /></svg>
          </TrayIcon>
          <TrayIcon $gap={9}>
            <svg width="17" height="15" viewBox="0 0 17 15"><path d="M1 4.500h2L6.500 1v11L3 9H1z" stroke="#111" strokeWidth="1.100" fill="none" /><circle cx="12" cy="9.500" r="4.700" fill="#da2032" /><path d="M10 7.500l4 4M14 7.500l-4 4" stroke="#fff" strokeWidth="1.300" /></svg>
          </TrayIcon>
          <Language>ENG</Language>
          <Clock>
            <span>3:43 PM</span>
            <span>6/13/2024</span>
          </Clock>
          <Notifications width="24" height="24" viewBox="0 0 24 24">
            <path d="M0 0h16v12H7l-3 3.500V12H0z" fill="#0b0b0b" /><path d="M3 3.500h10M3 6h10M3 8.500h6" stroke="#fff" strokeWidth="1.100" />
            <circle cx="15.500" cy="15.500" r="7.700" fill="#d9dce0" stroke="#777b80" />
            <text x="15.500" y="19.700" fontSize="11.500" textAnchor="middle" fill="#111" fontFamily='"Open Sans", sans-serif'>2</text>
          </Notifications>
          <CopilotIcon />
          <ShowDesktop />
        </Tray>
      </Taskbar>
    </Screen>
  );
}
